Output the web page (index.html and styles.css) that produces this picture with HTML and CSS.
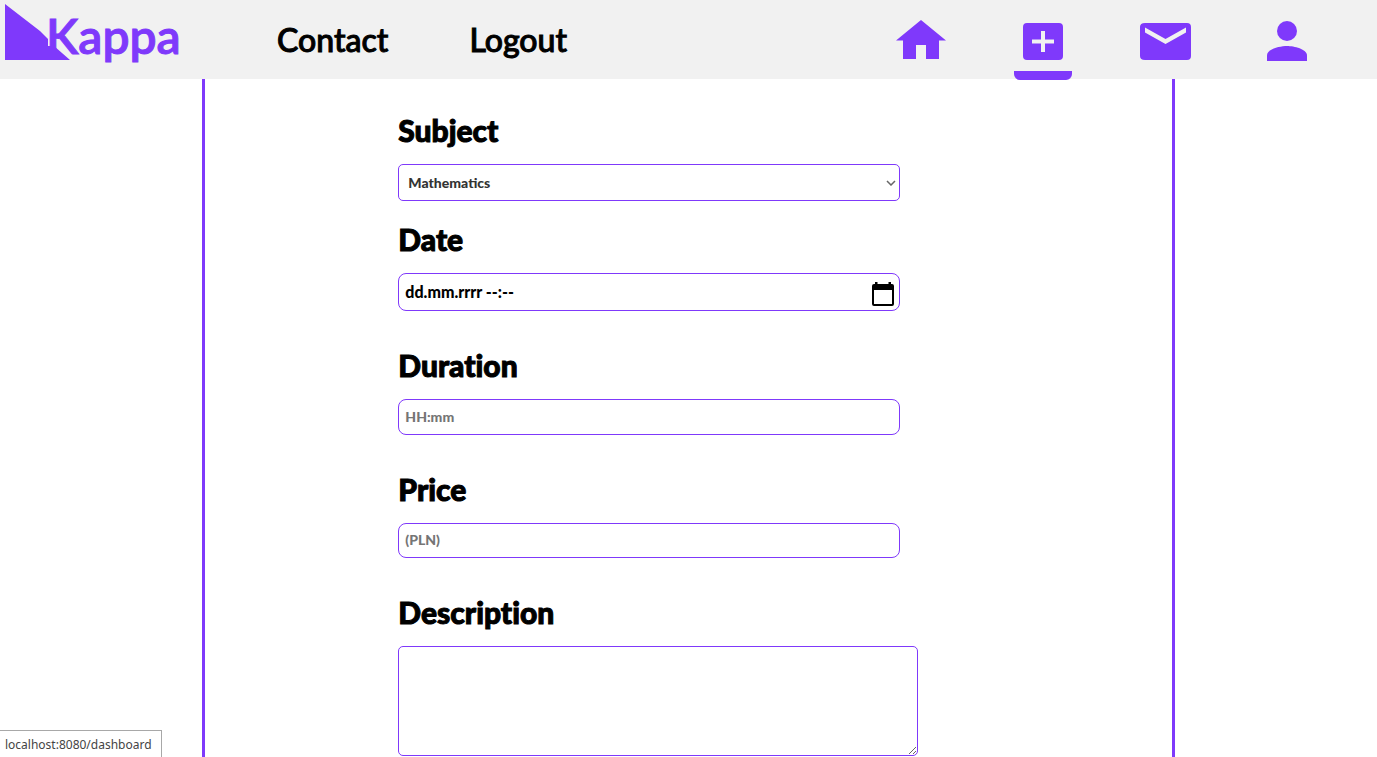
FILE: index.html
```html
<!DOCTYPE html>
<html lang="en">
<head>
<meta charset="utf-8">
<title>Kappa</title>
<link rel="stylesheet" href="styles.css">
</head>
<body>
<header class="topbar">
  <a class="logo" href="#" aria-label="Kappa">
    <svg class="logo-mark" viewBox="0 0 66 56" aria-hidden="true"><path d="M0 0L35 27L43 35V42H49L65 56H0Z"/></svg>
    <span class="logo-text">Kappa</span>
  </a>
  <nav class="links">
    <a href="#">Contact</a>
    <a href="#">Logout</a>
  </nav>
  <nav class="icons">
    <a class="icon-link" href="#" aria-label="Home"><svg width="50" height="44" viewBox="0 -2 50 44"><path d="M25 0L50 20.500H43V39H30V25H20V39H7V20.500H0Z"/></svg></a>
    <a class="icon-link active" href="#" aria-label="Add"><svg width="40" height="44" viewBox="0 -5 40 44"><path fill-rule="evenodd" d="M4 0H36Q40 0 40 4V33Q40 37 36 37H4Q0 37 0 33V4Q0 0 4 0ZM18 8V16.500H9V20.500H18V29H22V20.500H31V16.500H22V8Z"/></svg></a>
    <a class="icon-link" href="#" aria-label="Messages"><svg width="52" height="44" viewBox="-1 -5 52 44"><path fill-rule="evenodd" d="M5 0H47Q51 0 51 4V33Q51 37 47 37H5Q0 37 0 33V4Q0 0 5 0ZM5 4.500V9.500L25.500 21L46 9.500V4.500L25.500 16Z"/></svg></a>
    <a class="icon-link" href="#" aria-label="Profile"><svg width="40" height="44" viewBox="0 -3 40 44"><circle cx="20" cy="10" r="10"/><path d="M0 40V34.500C0 28 13 25 20 25S40 28 40 34.500V40Z"/></svg></a>
  </nav>
</header>
<main class="panel">
  <form class="form">
    <div class="field near">
      <label for="subject">Subject</label>
      <div class="control">
        <select id="subject" class="box subject"><option>Mathematics</option></select>
        <svg class="chevron" width="10" height="6" viewBox="0 0 10 6" aria-hidden="true"><path d="M1 1L5 5L9 1"/></svg>
      </div>
    </div>
    <div class="field">
      <label for="date">Date</label>
      <div class="control">
        <input id="date" class="box date" type="text" value="dd.mm.rrrr --:--">
        <button class="calendar" type="button" aria-label="Open calendar"><svg width="22" height="24" viewBox="0 0 22 24"><path fill-rule="evenodd" d="M3 0H5.500V2H16.500V0H19V2H20Q22 2 22 4V22Q22 24 20 24H2Q0 24 0 22V4Q0 2 2 2H3ZM2 8V22H20V8Z"/></svg></button>
      </div>
    </div>
    <div class="field">
      <label for="duration">Duration</label>
      <input id="duration" class="box duration" type="text" placeholder="HH:mm">
    </div>
    <div class="field">
      <label for="price">Price</label>
      <input id="price" class="box price" type="text" placeholder="(PLN)">
    </div>
    <div class="field">
      <label for="description">Description</label>
      <textarea id="description" class="box description"></textarea>
    </div>
  </form>
</main>
<div class="status">localhost:8080/dashboard</div>
</body>
</html>
```
FILE: styles.css
```css
* { box-sizing: border-box; }
body {
  margin: 0;
  height: 100vh;
  overflow: hidden;
  display: flex;
  flex-direction: column;
  background: #fff;
  font-family: Lato, "Liberation Sans", sans-serif;
  font-variant-ligatures: none;
}
.topbar {
  flex: none;
  display: flex;
  height: 79px;
  background: #f1f1f1;
}
a { color: inherit; text-decoration: none; }
.logo {
  position: relative;
  width: 277px;
  padding: 4px 5px;
  color: #7f39fb;
}
.logo-mark {
  display: block;
  width: 66px;
  height: 56px;
  fill: currentColor;
}
.logo-text {
  position: absolute;
  left: 46px;
  top: 6px;
  font-size: 48px;
  line-height: 60px;
  font-weight: 600;
  -webkit-text-stroke: 1px currentColor;
}
.links {
  display: flex;
  gap: 81px;
  color: #000;
  font-size: 32px;
  line-height: 80px;
  font-weight: 500;
  -webkit-text-stroke: 1px currentColor;
}
.icons {
  display: flex;
  gap: 64px;
  margin-left: auto;
  padding-right: 61px;
  color: #7f39fb;
}
.icon-link {
  position: relative;
  width: 58px;
  height: 80px;
  display: flex;
  align-items: center;
  justify-content: center;
}
.icon-link svg { flex: none; fill: currentColor; }
.active::after {
  content: "";
  position: absolute;
  inset: auto 0 0;
  height: 9px;
  border-radius: 0 0 6px 6px;
  background: currentColor;
}
.panel {
  flex: 1 0 auto;
  width: calc(70% + 10px);
  margin: 0 auto;
  padding: 32px 10% 0 calc(14% + 1px);
  border: solid #7f39fb;
  border-width: 0 3px;
}
.form {
  display: flex;
  flex-direction: column;
  gap: 35px;
}
.near { margin-bottom: -16px; }
.field label {
  display: block;
  width: max-content;
  margin-bottom: 14px;
  font-size: 30px;
  line-height: 39px;
  font-weight: 900;
  -webkit-text-stroke: 1px currentColor;
}
.control { position: relative; width: 502px; }
.box {
  display: block;
  appearance: none;
  width: 502px;
  padding: 0 6px 2px;
  border: 1px solid #7f39fb;
  border-radius: 8px;
  background: #fff;
  color: #000;
  font: 900 14px Lato, "Liberation Sans", sans-serif;
  outline: none;
}
.box::placeholder { color: #757575; }
.subject { height: 37px; padding: 0 9px; border-radius: 5px; color: #333; }
.date { height: 38px; font-size: 16px; }
.duration { height: 36px; }
.price { height: 35px; }
.description { width: 520px; height: 110px; border-radius: 5px; }
.chevron {
  position: absolute;
  right: 4px;
  top: 16px;
  fill: none;
  stroke: #666;
  stroke-width: 1.5;
  pointer-events: none;
}
.calendar {
  position: absolute;
  right: 6px;
  top: 9px;
  padding: 0;
  border: 0;
  background: none;
}
.calendar svg { display: block; }
.status {
  position: fixed;
  left: 0;
  bottom: 0;
  padding: 2px 9px 0 5px;
  border: 1px solid #a8a8a8;
  border-width: 1px 1px 0 0;
  background: #fff;
  color: #444;
  font: 12px/24px "Noto Sans", sans-serif;
}
```
